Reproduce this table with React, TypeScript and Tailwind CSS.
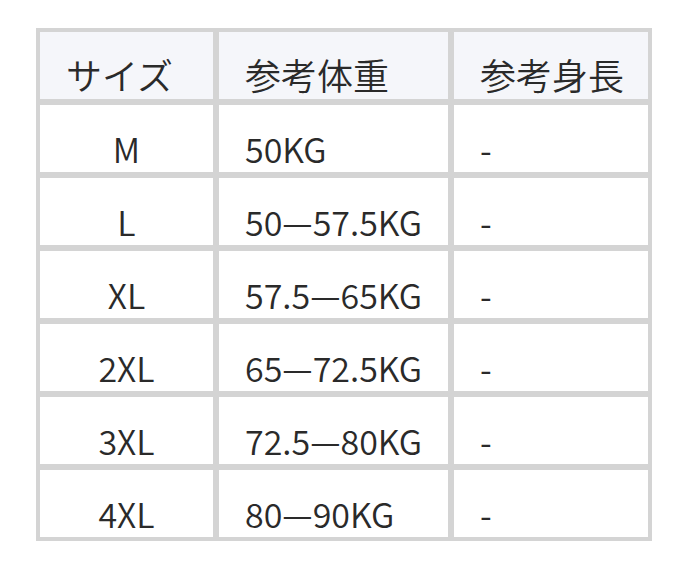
const rows = [
  { size: "M", weight: "50KG", height: "-" },
  { size: "L", weight: "50—57.5KG", height: "-" },
  { size: "XL", weight: "57.5—65KG", height: "-" },
  { size: "2XL", weight: "65—72.5KG", height: "-" },
  { size: "3XL", weight: "72.5—80KG", height: "-" },
  { size: "4XL", weight: "80—90KG", height: "-" },
];

export default function App() {
  return (
    <div
      className="min-h-[568px] w-[687px] bg-white pl-[36px] pt-[28px] text-[#2a2a2a]"
      style={{ fontFamily: '"Noto Sans CJK JP", "Noto Sans", sans-serif' }}
    >
      <div className="grid w-[616px] grid-cols-[173px_229px_194px] gap-[6px] bg-[#d4d4d4] p-[4px] font-[350]">
        {/* Header */}
        <div className="flex h-[67px] items-end bg-[#f5f6fa] pb-[7px] pl-[26px] text-[36px] leading-none">
          サイズ
        </div>
        <div className="flex h-[67px] items-end bg-[#f5f6fa] pb-[7px] pl-[26px] text-[36px] leading-none">
          参考体重
        </div>
        <div className="flex h-[67px] items-end bg-[#f5f6fa] pb-[7px] pl-[26px] text-[36px] leading-none">
          参考身長
        </div>

        {rows.map((row, index) => (
          <div key={index} className="contents">
            <div className="flex h-[67px] items-end justify-center bg-white pb-[6px] text-[34px] leading-none">
              {row.size}
            </div>
            <div className="flex h-[67px] items-end bg-white pb-[6px] pl-[26px] text-[34px] leading-none">
              {row.weight}
            </div>
            <div className="flex h-[67px] items-end bg-white pb-[6px] pl-[26px] text-[34px] leading-none">
              {row.height}
            </div>
          </div>
        ))}
      </div>
    </div>
  );
}
